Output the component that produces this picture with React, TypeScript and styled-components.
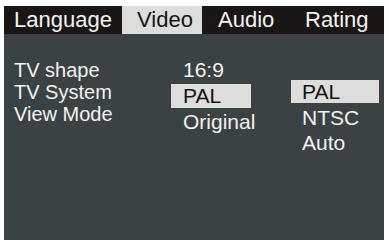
import React from 'react'
import styled, { createGlobalStyle } from 'styled-components'

const GlobalStyle = createGlobalStyle`
  html, body {
    margin: 0;
    padding: 0;
    background: #ffffff;
  }
  body {
    font-family: 'Liberation Sans', Arial, sans-serif;
  }
`

const Screen = styled.div`
  margin: 6px 5px 0 4px;
  height: 234px;
  background: #3b4243;
  display: flex;
  flex-direction: column;
`

const TabBar = styled.div`
  display: flex;
  height: 28px;
  background: #1b1616;
`

const Tab = styled.div<{ $width: number; $pad: number; $active?: boolean }>`
  width: ${p => p.$width}px;
  padding-left: ${p => p.$pad}px;
  box-sizing: border-box;
  font-size: 22px;
  line-height: 28px;
  color: ${p => (p.$active ? '#141414' : '#f4f4f4')};
  background: ${p => (p.$active ? '#dddddb' : 'transparent')};
  white-space: nowrap;
`

const Body = styled.div`
  display: flex;
  align-items: flex-start;
  padding: 24px 0 0 10px;
`

const Labels = styled.div`
  width: 157px;
  margin-top: 1px;
  display: flex;
  flex-direction: column;
`

const Label = styled.div`
  font-size: 20px;
  line-height: 22px;
  color: #f2f2f2;
  white-space: nowrap;
`

const Options = styled.div<{ $width: number; $top: number; $gap: number }>`
  width: ${p => p.$width}px;
  margin-top: ${p => p.$top}px;
  display: flex;
  flex-direction: column;
  gap: ${p => p.$gap}px;
`

const Option = styled.div<{ $selected?: boolean; $row: number; $pad: number; $width?: number }>`
  width: ${p => (p.$width ? `${p.$width}px` : 'auto')};
  height: ${p => p.$row}px;
  line-height: ${p => p.$row}px;
  padding-left: ${p => p.$pad}px;
  box-sizing: border-box;
  font-size: 21px;
  color: ${p => (p.$selected ? '#141414' : '#f2f2f2')};
  background: ${p => (p.$selected ? '#dddddb' : 'transparent')};
  white-space: nowrap;
`

const tabs = [
  { name: 'Language', width: 118, pad: 10 },
  { name: 'Video', width: 80, pad: 15, active: true },
  { name: 'Audio', width: 88, pad: 16 },
  { name: 'Rating', width: 94, pad: 15 }
]

const settings = [
  { label: 'TV shape', value: '16:9' },
  { label: 'TV System', value: 'PAL', selected: true },
  { label: 'View Mode', value: 'Original' }
]

const systems = ['PAL', 'NTSC', 'Auto']

const App = () => {
  return (
    <>
      <GlobalStyle />
      <Screen>
        <TabBar>
          {tabs.map(t => (
            <Tab key={t.name} $width={t.width} $pad={t.pad} $active={t.active}>
              {t.name}
            </Tab>
          ))}
        </TabBar>
        <Body>
          <Labels>
            {settings.map(s => (
              <Label key={s.label}>{s.label}</Label>
            ))}
          </Labels>
          <Options $width={120} $top={0} $gap={2}>
            {settings.map(s => (
              <Option key={s.label} $row={24} $pad={12} $width={80} $selected={s.selected}>
                {s.value}
              </Option>
            ))}
          </Options>
          <Options $width={88} $top={22} $gap={2.5}>
            {systems.map((s, i) => (
              <Option key={s} $row={23} $pad={11} $selected={i === 0}>
                {s}
              </Option>
            ))}
          </Options>
        </Body>
      </Screen>
    </>
  )
}

export default App
